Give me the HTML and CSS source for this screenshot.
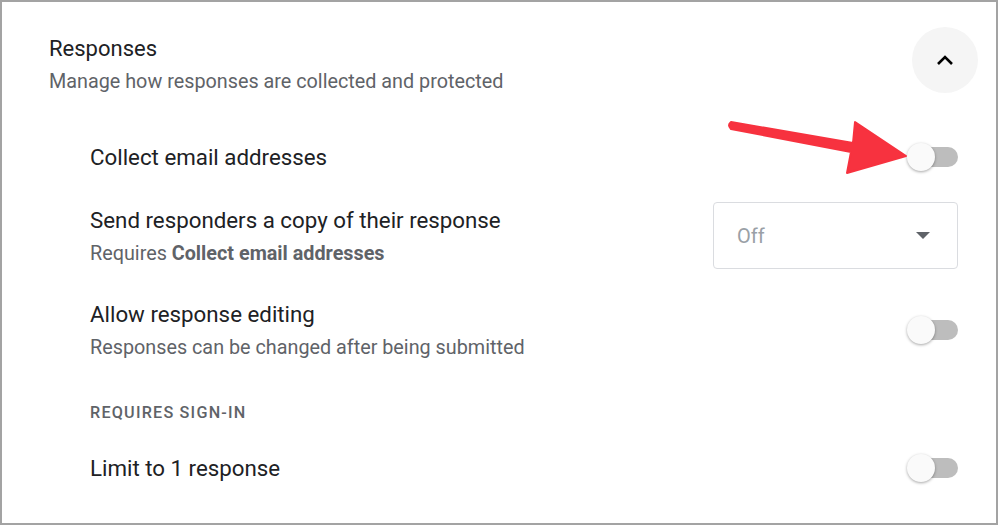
FILE: index.html
```html
<!DOCTYPE html>
<html>
<head>
<meta charset="utf-8">
<link rel="stylesheet" href="styles.css">
</head>
<body>
<div class="frame">
  <div class="header">
    <div class="head-text">
      <div class="title">Responses</div>
      <div class="subtitle">Manage how responses are collected and protected</div>
    </div>
    <div class="collapse">
      <svg width="20" height="12" viewBox="0 0 20 12"><path d="M3 10 L10 3 L17 10" fill="none" stroke="#000" stroke-width="2.6"/></svg>
    </div>
  </div>

  <div class="settings">
    <div class="row row1">
      <div class="label">Collect email addresses</div>
      <div class="toggle"><span class="track"></span><span class="thumb"></span></div>
    </div>
    <div class="row row2">
      <div class="text">
        <div class="label">Send responders a copy of their response</div>
        <div class="sub">Requires <b>Collect email addresses</b></div>
      </div>
      <div class="select">
        <span class="select-value">Off</span>
        <svg width="14" height="7" viewBox="0 0 14 7"><path d="M0 0 L14 0 L7 7 Z" fill="#5f6368"/></svg>
      </div>
    </div>
    <div class="row row3">
      <div class="text">
        <div class="label">Allow response editing</div>
        <div class="sub">Responses can be changed after being submitted</div>
      </div>
      <div class="toggle"><span class="track"></span><span class="thumb"></span></div>
    </div>
    <div class="section">REQUIRES SIGN-IN</div>
    <div class="row row4">
      <div class="label">Limit to 1 response</div>
      <div class="toggle"><span class="track"></span><span class="thumb"></span></div>
    </div>
  </div>

  <svg class="arrow" width="1000" height="526" viewBox="0 0 1000 526">
    <path d="M731 122 Q727 125 731 129 L851 152 L847 173 L906 156 L855 122 L853 143 Z" fill="#f7323f" stroke="#f7323f" stroke-width="2" stroke-linejoin="round"/>
  </svg>
</div>
</body>
</html>
```
FILE: styles.css
```css
html, body {
  margin: 0;
  padding: 0;
  background: #fff;
}
body {
  font-family: Roboto, "Liberation Sans", Arial, sans-serif;
  color: #202124;
}
.frame {
  position: relative;
  box-sizing: border-box;
  width: 998px;
  height: 525px;
  border: 2px solid #a3a3a3;
  padding: 25px 18px 0 47px;
  overflow: hidden;
}
.header {
  display: flex;
  justify-content: space-between;
  align-items: flex-start;
}
.head-text {
  padding-top: 8px;
}
.title {
  font-size: 22px;
  line-height: 28px;
  color: #202124;
}
.subtitle {
  margin-top: 7px;
  font-size: 19.8px;
  line-height: 24px;
  color: #5f6368;
}
.collapse {
  width: 66px;
  height: 66px;
  border-radius: 50%;
  background: #f5f5f5;
  display: flex;
  align-items: center;
  justify-content: center;
}
.settings {
  padding-left: 41px;
  padding-right: 20px;
}
.row {
  display: flex;
  justify-content: space-between;
  align-items: center;
}
.row1 { margin-top: 49px; }
.row2 { margin-top: 31px; }
.row3 { margin-top: 31px; }
.row4 { margin-top: 31px; }
.label {
  font-size: 22.3px;
  line-height: 28px;
  color: #202124;
}
.sub {
  margin-top: 8px;
  font-size: 19.8px;
  line-height: 24px;
  color: #5f6368;
}
.sub b {
  font-weight: 700;
}
.section {
  margin-top: 43px;
  font-size: 16.2px;
  line-height: 20px;
  font-weight: 500;
  letter-spacing: 1.2px;
  color: #5f6368;
}
.toggle {
  position: relative;
  width: 51px;
  height: 28px;
}
.track {
  position: absolute;
  left: 8px;
  top: 4px;
  width: 43px;
  height: 20px;
  border-radius: 10px;
  background: #bdbdbd;
}
.thumb {
  position: absolute;
  left: 0;
  top: 0;
  width: 28px;
  height: 28px;
  border-radius: 50%;
  background: #fafafa;
  box-shadow: 0 1px 3px rgba(0,0,0,0.35);
}
.select {
  box-sizing: border-box;
  width: 245px;
  height: 67px;
  border: 1px solid #dadce0;
  border-radius: 4px;
  display: flex;
  align-items: center;
  justify-content: space-between;
  padding: 0 27px 0 23px;
}
.select-value {
  font-size: 20px;
  color: #9aa0a6;
}
.arrow {
  position: absolute;
  left: -2px;
  top: -2px;
}
```
